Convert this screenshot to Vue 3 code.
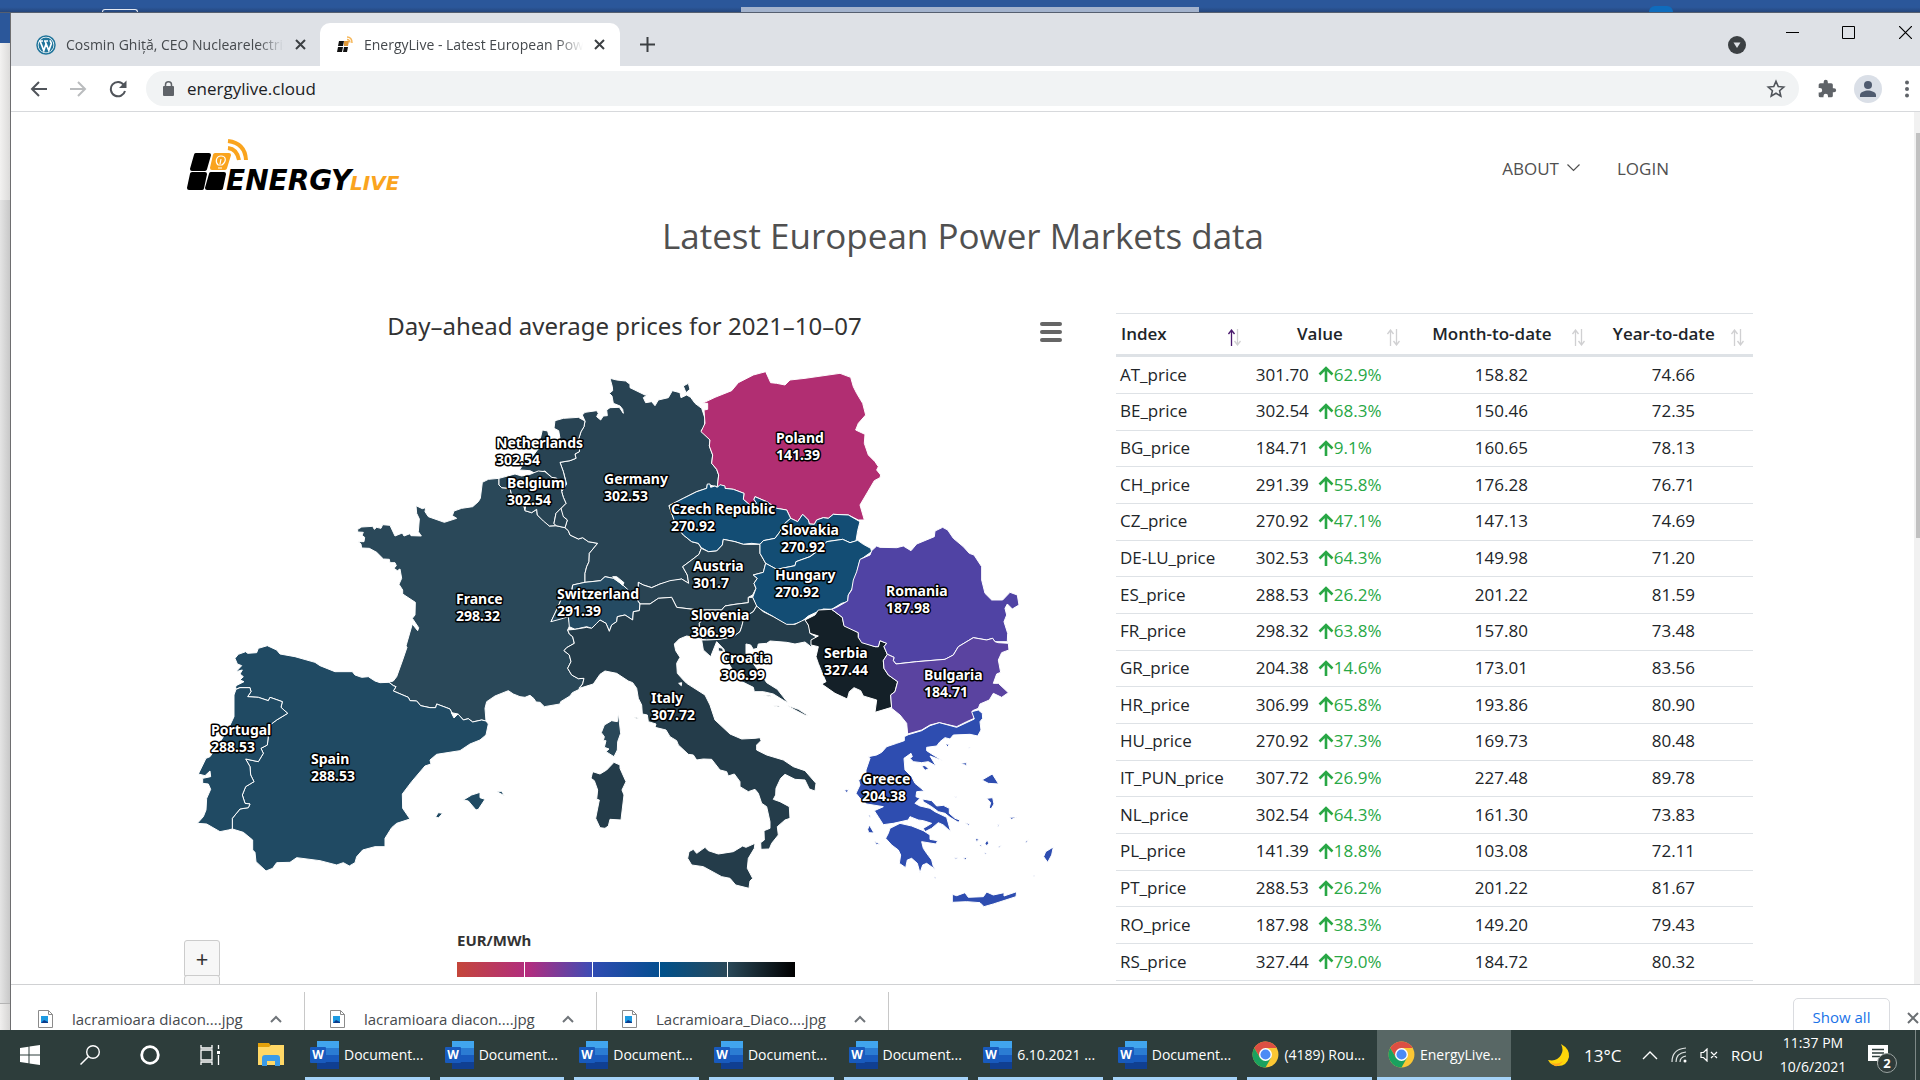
<script setup>
import { ref } from 'vue'

const address = ref('energylive.cloud')

const rows = [
  ['AT_price', '301.70', '62.9%', '158.82', '74.66'],
  ['BE_price', '302.54', '68.3%', '150.46', '72.35'],
  ['BG_price', '184.71', '9.1%', '160.65', '78.13'],
  ['CH_price', '291.39', '55.8%', '176.28', '76.71'],
  ['CZ_price', '270.92', '47.1%', '147.13', '74.69'],
  ['DE-LU_price', '302.53', '64.3%', '149.98', '71.20'],
  ['ES_price', '288.53', '26.2%', '201.22', '81.59'],
  ['FR_price', '298.32', '63.8%', '157.80', '73.48'],
  ['GR_price', '204.38', '14.6%', '173.01', '83.56'],
  ['HR_price', '306.99', '65.8%', '193.86', '80.90'],
  ['HU_price', '270.92', '37.3%', '169.73', '80.48'],
  ['IT_PUN_price', '307.72', '26.9%', '227.48', '89.78'],
  ['NL_price', '302.54', '64.3%', '161.30', '73.83'],
  ['PL_price', '141.39', '18.8%', '103.08', '72.11'],
  ['PT_price', '288.53', '26.2%', '201.22', '81.67'],
  ['RO_price', '187.98', '38.3%', '149.20', '79.43'],
  ['RS_price', '327.44', '79.0%', '184.72', '80.32']
]

const columns = ['Index', 'Value', 'Month-to-date', 'Year-to-date']

// Country outlines, grouped by map sheet; dx/dy is the sheet's origin.
const sheets = [
  {
    dx: 0, dy: 0,
    shapes: [
      { fill: '#2a4859', d: 'M957,355 925,358 907,367 901,415 895,425 878,440 845,445 822,453 817,467 830,475 793,487 745,470 735,455 737,443 727,446 708,437 710,460 718,477 715,515 724,528 693,527 690,521 672,528 667,519 645,528 630,496 608,494 603,505 590,502 583,508 578,499 545,501 533,508 533,516 550,517 546,526 554,532 552,545 535,545 543,552 545,564 568,565 590,577 610,597 628,598 630,608 645,608 649,617 642,625 652,632 660,627 665,655 657,673 668,690 668,702 706,727 705,765 697,775 716,803 713,812 697,792 678,858 681,862 668,900 650,950 640,963 627,967 640,977 648,980 640,993 685,1012 690,1022 710,1023 722,1037 750,1043 767,1043 770,1032 810,1047 820,1067 835,1063 850,1080 865,1076 878,1086 905,1080 918,1083 915,1045 920,1025 945,1008 985,992 1000,1002 1020,1010 1035,1012 1050,1006 1062,1016 1068,1026 1080,1027 1093,1040 1140,1032 1142,1025 1170,1008 1177,998 1198,988 1198,983 1208,972 1212,955 1195,956 1175,945 1163,925 1173,905 1168,885 1152,872 1160,863 1183,850 1178,830 1168,822 1163,810 1170,795 1165,770 1135,772 1113,785 1132,745 1145,715 1175,690 1178,675 1215,667 1215,640 1220,620 1227,605 1228,580 1253,550 1225,545 1208,533 1195,537 1170,525 1165,512 1155,503 1128,497 1108,498 1072,465 1070,448 1055,458 1035,452 1028,425 995,405 990,385 965,383 957,375Z' }
    ]
  },
  {
    dx: 900, dy: 0,
    shapes: [
      { fill: '#284353', d: 'M315,183 307,165 315,157 350,152 355,160 350,170 362,180 370,168 382,167 380,150 390,143 418,142 430,160 428,148 420,138 400,130 396,108 388,100 398,92 397,80 390,55 410,60 437,63 450,73 450,83 495,105 503,104 490,113 497,128 515,125 525,137 535,120 565,113 577,92 600,98 603,113 620,105 632,112 645,130 665,145 675,175 673,200 663,213 690,240 688,258 698,285 695,310 710,328 716,345 712,380 682,374 680,385 650,395 610,415 567,437 575,460 590,500 610,525 635,545 655,550 664,565 657,583 635,600 608,620 622,645 626,670 605,657 570,665 540,672 515,683 490,675 475,667 475,700 447,695 425,672 400,655 375,650 362,662 315,667 315,640 320,620 327,605 328,580 353,550 325,545 308,533 295,537 270,525 265,512 255,503 262,480 245,465 243,445 258,430 250,412 245,395 260,372 250,335 240,307 270,302 288,295 285,282 298,275 300,255 295,240 303,215 312,200Z M610,78 625,70 630,88 618,98Z' },
      { fill: '#284353', d: 'M315,183 295,172 250,175 225,182 222,205 236,212 240,235 225,245 210,240 203,213 187,210 180,240 178,262 150,300 128,316 118,330 150,332 165,340 195,333 215,352 230,355 232,370 250,377 256,360 250,335 240,307 270,302 288,295 285,282 298,275 300,255 295,240 303,215 312,200Z' },
      { fill: '#284454', d: 'M57,355 105,342 125,348 150,343 175,333 195,335 215,352 230,355 232,370 245,375 245,395 250,412 258,430 243,445 228,460 222,490 228,497 208,498 190,483 172,465 170,448 155,458 135,452 137,435 125,412 95,405 90,385 65,383 57,375Z' },
      { fill: '#284353', d: 'M243,445 228,460 222,490 228,497 255,503 262,480 250,470Z' },
      { fill: '#b12e72', d: 'M667,130 705,112 755,92 775,68 820,45 857,35 872,68 890,70 915,75 930,60 975,55 1080,40 1112,52 1120,80 1130,100 1148,130 1157,165 1135,190 1127,210 1155,223 1153,250 1165,285 1185,305 1195,320 1190,330 1202,345 1200,353 1183,362 1140,435 1153,480 1135,480 1105,465 1060,463 1045,475 1030,473 1010,480 1003,493 988,492 985,480 968,463 953,485 932,475 920,450 890,445 860,425 825,410 822,418 830,430 812,437 790,418 792,400 760,388 735,385 733,378 712,380 716,345 710,328 695,310 698,285 688,258 690,240 663,215 675,190 672,150 683,148 683,130Z' },
      { fill: '#134d74', d: 'M567,437 610,415 650,395 680,385 682,372 690,372 692,382 705,378 712,382 720,374 735,378 735,385 760,388 792,400 790,418 812,437 830,430 822,418 825,410 860,425 890,445 920,450 932,475 915,490 900,515 885,535 850,542 840,553 815,550 790,553 765,545 730,538 727,555 710,573 685,575 664,563 655,550 635,545 610,525 590,500 575,460Z' },
      { fill: '#2a4453', d: 'M475,667 490,675 515,683 540,672 570,662 605,657 626,670 622,645 608,620 635,600 657,583 664,565 685,575 710,573 727,555 730,538 765,545 790,553 840,553 840,580 857,610 850,637 820,645 832,655 822,670 828,685 818,705 805,712 805,728 765,733 735,738 725,750 655,750 590,742 575,712 535,715 510,732 480,732 470,715 475,700Z' },
      { fill: '#134d74', d: 'M932,475 953,485 968,463 985,480 988,492 1003,493 1010,480 1030,473 1045,475 1060,463 1105,465 1140,485 1133,512 1128,543 1110,548 1088,538 1040,545 1025,565 1010,572 990,590 948,605 945,617 890,628 857,610 840,580 840,553 850,542 885,535 900,515 915,490Z' },
      { fill: '#134d74', d: 'M857,610 890,628 945,617 948,605 990,590 1025,565 1040,545 1088,538 1110,548 1133,541 1150,553 1172,565 1175,575 1140,600 1130,640 1120,680 1105,705 1103,725 1085,730 1055,748 1030,747 985,768 965,785 935,795 915,793 880,770 830,742 818,712 828,685 822,670 832,655 820,645 850,637Z' },
      { fill: '#254b63', d: 'M315,667 362,662 375,650 400,655 425,672 445,690 447,700 470,718 480,732 478,752 460,755 458,780 435,765 412,770 410,785 395,795 388,814 378,790 360,780 350,790 335,805 320,800 285,808 268,800 265,770 250,775 213,785 232,745 245,715 275,700 278,675Z' },
      { fill: '#fff', d: 'M398,650 410,650 432,668 428,676Z' }
    ]
  },
  {
    dx: 0, dy: 780,
    shapes: [
      { fill: '#204a63', d: 'M627,187 640,197 648,200 640,213 685,232 690,242 710,243 722,257 750,263 767,263 770,252 810,267 820,287 835,283 850,300 865,296 878,306 905,300 918,303 925,312 918,345 900,360 870,372 840,392 770,403 750,420 753,432 735,438 695,485 667,522 668,565 690,597 650,610 635,623 615,655 615,680 585,680 548,690 530,710 525,728 508,738 490,728 470,735 420,722 350,713 330,727 290,728 278,745 258,753 228,725 225,697 218,690 218,660 190,637 157,627 157,595 180,567 205,563 210,552 195,550 187,525 197,500 222,485 212,465 210,440 197,417 235,425 250,400 243,385 262,375 267,330 270,315 290,300 323,280 303,262 307,245 270,232 265,242 235,232 203,230 213,215 210,203 180,203 166,208 168,197 192,185 180,180 190,170 180,162 187,150 168,155 185,137 172,132 165,115 175,103 197,95 203,100 230,98 235,85 262,77 290,90 300,102 345,110 405,127 420,137 465,155 517,155 525,165 545,172 565,170 585,183 600,188Z M850,540 875,525 900,517 900,533 915,538 895,568 888,570 865,543Z M948,514 965,514 973,527 960,520Z M767,590 775,578 788,580 775,594Z' },
      { fill: '#204a63', d: 'M157,627 157,595 180,567 205,563 210,552 195,550 187,525 197,500 222,485 212,465 210,440 197,417 235,425 250,400 243,385 262,375 267,330 270,315 290,300 323,280 303,262 307,245 270,232 265,242 235,232 203,230 213,215 210,203 180,203 168,208 162,225 162,290 148,320 118,370 90,410 78,415 55,462 75,467 90,453 92,470 68,475 68,490 85,492 92,508 80,535 78,570 70,590 52,610 80,612 120,635 145,630Z' },
      { fill: '#fff', d: 'M814,278 834,282 822,294Z' }
    ]
  },
  {
    dx: 1080, dy: 600,
    shapes: [
      { fill: '#243c4a', d: 'M83,210 105,208 140,202 155,205 170,190 180,180 198,190 208,214 215,195 230,185 232,170 255,165 278,180 280,155 298,152 300,132 330,132 355,115 395,112 410,142 475,150 495,170 478,190 478,212 487,238 460,232 440,228 418,237 403,252 407,272 420,292 410,310 412,340 430,360 440,370 495,405 510,435 525,480 570,522 605,537 645,535 660,533 663,542 650,555 650,570 680,585 730,600 760,620 795,632 828,670 825,693 808,687 795,660 765,658 735,643 722,655 708,685 707,705 700,718 720,725 748,740 750,775 735,780 712,800 715,825 695,850 688,867 663,868 662,848 673,840 672,812 690,805 690,785 680,740 665,730 655,700 645,688 625,695 600,680 600,665 583,642 565,648 560,635 540,630 515,598 490,597 470,600 460,585 445,583 415,555 410,542 390,530 378,510 345,502 348,492 325,485 322,465 307,462 305,435 295,415 290,385 278,368 265,363 230,340 195,333 180,343 160,372 118,385 128,372 132,355 115,356 95,345 83,325 93,305 88,285 72,272 80,263 103,250 98,230 88,222Z M460,868 470,880 495,862 505,872 535,882 580,875 608,858 618,862 645,850 643,865 625,895 622,925 638,955 630,963 627,985 587,975 570,955 545,950 490,920 455,915 443,895 447,875Z M222,607 240,615 240,625 258,665 246,690 252,705 243,780 210,778 205,798 195,805 180,803 167,775 178,720 170,718 173,690 163,662 153,655 158,635 180,642 200,630Z M283,471 297,473 290,476Z' },
      { fill: '#2a4859', d: 'M235,457 238,485 242,520 233,545 232,570 222,590 198,575 207,567 193,562 198,542 190,542 193,530 184,518 193,495 215,482 232,485Z' },
      { fill: '#243c4a', d: 'M475,150 545,150 555,138 585,133 625,128 625,112 638,112 650,138 640,155 615,170 605,200 600,215 580,230 540,238 500,240 485,238 478,212 478,190 495,170Z' },
      { fill: '#243c4a', d: 'M650,138 670,155 700,170 740,193 765,193 785,183 795,178 808,200 810,220 833,233 815,240 815,262 795,246 765,252 740,247 690,243 680,250 655,252 652,265 640,268 632,255 618,252 618,280 645,318 665,345 680,368 712,388 745,430 700,402 670,395 643,395 640,382 600,362 578,330 560,300 552,268 530,245 520,270 512,290 490,270 485,240 500,240 540,238 580,230 600,215 605,200 612,172 640,155Z M670,405 692,406 690,410Z M698,437 720,438 715,441Z M738,435 775,448 803,466 798,467 765,450Z M535,262 548,265 550,275 535,273Z' },
      { fill: '#fff', d: 'M416,370 425,368 424,377Z' }
    ]
  },
  {
    dx: 1800, dy: 420,
    shapes: [
      { fill: '#142028', d: 'M75,360 105,345 115,330 155,328 187,352 192,375 235,398 235,412 245,425 285,440 295,440 300,422 320,430 312,440 322,463 310,482 312,505 325,525 353,545 345,575 332,585 335,622 285,637 290,600 250,588 242,572 222,563 208,575 202,597 165,580 125,552 138,545 125,515 115,490 108,470 115,440 93,435 93,420 115,408 90,400 85,375Z' },
      { fill: '#5043a4', d: 'M155,328 170,322 203,303 205,285 215,270 220,240 230,215 240,178 270,165 275,152 290,138 300,142 350,143 370,138 393,152 410,132 463,110 465,93 488,82 503,90 520,115 550,140 568,160 582,165 605,200 605,240 615,280 635,300 668,300 690,277 712,285 717,315 697,327 682,312 675,325 680,345 672,365 683,400 682,425 645,425 638,415 620,420 580,413 535,440 520,465 495,478 410,485 348,492 340,482 342,472 322,463 312,440 320,430 300,422 295,440 285,440 245,428 235,412 235,398 192,378 187,352Z' },
      { fill: '#5a43a0', d: 'M322,463 342,472 340,482 348,492 410,485 495,478 520,465 535,440 580,413 620,420 638,415 645,425 655,428 685,430 687,450 665,458 655,480 662,517 650,522 640,550 655,550 685,578 665,592 640,580 628,600 600,612 595,625 578,632 583,655 560,665 530,680 478,668 450,675 425,690 383,702 380,670 360,645 335,625 332,585 345,575 353,545 325,525 312,505 310,482Z' },
      { fill: '#2e4db0', d: 'M595,630 607,640 608,655 600,665 603,690 593,708 570,703 520,705 510,717 495,713 480,725 470,738 440,742 440,752 455,762 488,782 450,768 468,798 445,785 425,788 400,785 390,775 397,770 393,760 372,775 375,810 395,830 405,850 433,873 410,875 408,890 420,895 405,910 420,918 450,925 465,935 500,952 512,995 490,975 475,968 455,985 435,995 430,985 455,970 430,962 415,960 390,950 385,960 340,970 310,974 283,932 310,920 260,912 240,895 228,880 240,855 236,840 258,825 258,810 270,775 265,770 290,765 305,757 320,740 350,730 373,722 373,710 385,704 425,692 450,677 478,668 530,682 583,657 575,635Z' },
      { fill: '#2e4db0', d: 'M330,985 360,970 395,978 430,992 450,1005 450,1018 473,1022 468,1032 425,1025 430,1045 440,1060 455,1080 460,1100 468,1110 440,1090 428,1095 420,1119 412,1090 395,1075 382,1080 377,1103 358,1090 362,1065 355,1050 335,1035 317,1015 325,1000Z M517,1183 530,1187 555,1178 565,1192 610,1190 620,1176 640,1185 672,1178 672,1188 710,1175 708,1190 640,1212 612,1220 600,1208 560,1205 517,1207Z M428,897 455,902 470,918 490,916 508,925 508,940 525,955 540,960 535,967 510,952 495,940 475,935 455,920 430,905Z M606,840 637,822 656,852 625,850Z M620,895 638,893 642,912 633,927 628,922 632,908Z M820,1041 815,1065 803,1087 791,1070 797,1055Z M688,952 710,951 695,958Z M495,732 508,733 503,740Z M540,790 560,788 560,797 550,793Z M425,797 435,797 446,806 435,811Z M263,988 268,975 282,999 266,998Z M283,1024 300,1032 290,1034Z M193,871 205,868 202,879Z M615,1030 622,1020 626,1030 620,1038Z M556,968 568,971 566,977Z M585,1015 597,1018 590,1025Z M523,1073 533,1073 528,1078Z M550,1073 562,1073 556,1079Z M652,975 660,971 654,980Z M598,1036 606,1034 603,1041Z M613,1058 622,1060 616,1063Z M735,1025 745,1019 739,1028Z M655,1040 664,1036 658,1043Z M564,741 571,742 567,745Z M462,1128 468,1133 464,1137Z M266,946 272,945 270,955Z M524,889 531,891 527,894Z M760,1126 764,1127 762,1132Z' }
    ]
  }
]

const labels = [
  ['Netherlands', '302.54', 316, 88],
  ['Belgium', '302.54', 327, 128],
  ['Germany', '302.53', 424, 124],
  ['Poland', '141.39', 596, 83],
  ['Czech Republic', '270.92', 491, 154],
  ['Slovakia', '270.92', 601, 175],
  ['Austria', '301.7', 513, 211],
  ['Hungary', '270.92', 595, 220],
  ['Switzerland', '291.39', 377, 239],
  ['France', '298.32', 276, 244],
  ['Slovenia', '306.99', 511, 260],
  ['Croatia', '306.99', 541, 303],
  ['Italy', '307.72', 471, 343],
  ['Romania', '187.98', 706, 236],
  ['Serbia', '327.44', 644, 298],
  ['Bulgaria', '184.71', 744, 320],
  ['Greece', '204.38', 682, 424],
  ['Portugal', '288.53', 31, 375],
  ['Spain', '288.53', 131, 404]
]

const downloads = ['lacramioara diacon....jpg', 'lacramioara diacon....jpg', 'Lacramioara_Diaco....jpg']

const tasks = [
  { kind: 'word', name: 'Document...' },
  { kind: 'word', name: 'Document...' },
  { kind: 'word', name: 'Document...' },
  { kind: 'word', name: 'Document...' },
  { kind: 'word', name: 'Document...' },
  { kind: 'word', name: '6.10.2021 ...' },
  { kind: 'word', name: 'Document...' },
  { kind: 'chrome', name: '(4189) Rou...' },
  { kind: 'chrome', name: 'EnergyLive...', active: true }
]
</script>

<template>
  <div class="desktop">
    <div class="behind-top">
      <span class="behind-tab"></span>
      <span class="behind-search"></span>
      <span class="behind-user"></span>
    </div>
    <div class="middle">
      <div class="behind-side"><i class="s1"></i><i class="s2"></i><i class="s3"></i><i class="s4"></i></div>
      <div class="browser">
        <div class="tabstrip">
          <div class="tab">
            <svg class="fav" width="20" height="20" viewBox="0 0 20 20">
              <circle cx="10" cy="10" r="9" fill="#fff" stroke="#21759b" stroke-width="1.5" />
              <circle cx="10" cy="10" r="7.5" fill="#21759b" />
              <path d="M3 6h4M8 6h4M4 6l3.800 9.500L10 9M9 6l3.800 9.500 2.400-6.500c.4-1.500-1-2-1-3.800" fill="none" stroke="#fff" stroke-width="1.700" />
            </svg>
            <span class="tab-title">Cosmin Ghiță, CEO Nuclearelectrica</span>
            <button class="plain x" aria-label="Close tab"><svg width="11" height="11" viewBox="0 0 11 11"><path d="M1 1l9 9M10 1l-9 9" stroke="#3c4043" stroke-width="2" /></svg></button>
          </div>
          <div class="tab active">
            <svg class="fav" width="18" height="18" viewBox="0 0 18 18">
              <path d="M3 5h5l-1 5h-5zM2 11h5l-1 5h-5zM8 11h4l-1 5h-4z" fill="#111" />
              <path d="M8 5h5l-1 5h-4z" fill="#e09a3a" />
              <path d="M11 1q5 0 5 6M11 3.500q2.500 0 3 3" fill="none" stroke="#f6b75a" stroke-width="1.500" />
            </svg>
            <span class="tab-title">EnergyLive - Latest European Power</span>
            <button class="plain x" aria-label="Close tab"><svg width="11" height="11" viewBox="0 0 11 11"><path d="M1 1l9 9M10 1l-9 9" stroke="#3c4043" stroke-width="2" /></svg></button>
          </div>
          <button class="plain newtab" aria-label="New tab"><svg width="15" height="15" viewBox="0 0 15 15"><path d="M7.500 0v15M0 7.500h15" stroke="#3c4043" stroke-width="2" /></svg></button>
          <span class="grow"></span>
          <button class="plain search-tabs" aria-label="Search tabs"><svg width="18" height="18" viewBox="0 0 18 18"><circle cx="9" cy="9" r="9" fill="#3c4043" /><path d="M5.500 6.500h7l-3.500 5.500z" fill="#dee1e6" /></svg></button>
          <button class="plain win" aria-label="Minimize"><svg width="13" height="13" viewBox="0 0 13 13"><path d="M0 6.500h13" stroke="#000" /></svg></button>
          <button class="plain win" aria-label="Maximize"><svg width="13" height="13" viewBox="0 0 13 13"><path d="M.5.5h12v12h-12z" fill="none" stroke="#000" /></svg></button>
          <button class="plain win" aria-label="Close"><svg width="13" height="13" viewBox="0 0 13 13"><path d="M0 0l13 13M13 0l-13 13" stroke="#000" stroke-width="1.200" /></svg></button>
        </div>

        <div class="toolbar">
          <button class="plain" aria-label="Back"><svg width="18" height="18" viewBox="0 0 18 18"><path d="M17 9H2M9 2L2 9l7 7" fill="none" stroke="#50545a" stroke-width="2" /></svg></button>
          <button class="plain" aria-label="Forward"><svg width="18" height="18" viewBox="0 0 18 18"><path d="M1 9h15M9 2l7 7-7 7" fill="none" stroke="#babcbe" stroke-width="2" /></svg></button>
          <button class="plain reload" aria-label="Reload"><svg width="18" height="18" viewBox="0 0 18 18"><path d="M14.800 4.800A7.200 7.200 0 1 0 16 11" fill="none" stroke="#50545a" stroke-width="2" /><path d="M17.500 0.500v7.500H10z" fill="#50545a" /></svg></button>
          <label class="omnibox">
            <svg width="11" height="15" viewBox="0 0 11 15"><rect y="5" width="11" height="10" rx="1" fill="#5f6368" /><path d="M2.500 6V3.800a3 3 0 0 1 6 0V6" fill="none" stroke="#5f6368" stroke-width="1.500" /></svg>
            <input v-model="address" aria-label="Address" />
            <svg width="20" height="20" viewBox="0 0 24 24"><path d="M12 2.800l2.700 6.200 6.600.6-5 4.400 1.500 6.600-5.800-3.500-5.800 3.500 1.500-6.600-5-4.400 6.600-.6z" fill="none" stroke="#50545a" stroke-width="1.900" /></svg>
          </label>
          <button class="plain" aria-label="Extensions"><svg width="20" height="20" viewBox="0 0 24 24"><path fill="#5f6368" d="M20.500 11H19V7a2 2 0 0 0-2-2h-4V3.500a2.500 2.500 0 0 0-5 0V5H4a2 2 0 0 0-2 2v3.800h1.500a2.700 2.700 0 0 1 0 5.400H2V20a2 2 0 0 0 2 2h3.800v-1.500a2.700 2.700 0 0 1 5.400 0V22H17a2 2 0 0 0 2-2v-4h1.500a2.500 2.500 0 0 0 0-5z" /></svg></button>
          <button class="plain profile" aria-label="Profile"><svg width="28" height="28" viewBox="0 0 28 28"><circle cx="14" cy="14" r="14" fill="#dadfe7" /><circle cx="14" cy="10" r="4" fill="#4f5b6f" /><path d="M6 22v-2c0-3 5-4.500 8-4.500s8 1.500 8 4.500v2z" fill="#4f5b6f" /></svg></button>
          <button class="plain" aria-label="Menu"><svg width="4" height="18" viewBox="0 0 4 18"><circle cx="2" cy="2.500" r="2" fill="#5f6368" /><circle cx="2" cy="9" r="2" fill="#5f6368" /><circle cx="2" cy="15.500" r="2" fill="#5f6368" /></svg></button>
        </div>

        <div class="viewport">
          <div class="page">
            <header class="site-head">
              <a href="#" class="logo" aria-label="EnergyLive">
                <svg width="216" height="58" viewBox="0 0 216 58">
                  <g stroke-linejoin="round" stroke-width="4">
                    <path d="M9 19h13l-4 14h-13z" fill="#000" stroke="#000" />
                    <path d="M5 38h13l-3 14h-13z" fill="#000" stroke="#000" />
                    <path d="M24 38h13l-3 14h-14z" fill="#000" stroke="#000" />
                    <path d="M28 19h14l-4 13h-13z" fill="#faa41e" stroke="#faa41e" />
                  </g>
                  <path d="M31 29c-3-3-2-9 3-9s6 5 1 9M31 29h4M31 32h4M34 23l-1 5" fill="none" stroke="#fff" stroke-width="1.200" />
                  <path d="M41 5q17 2 18 19M41 12q9 1 11 12" fill="none" stroke="#faa41e" stroke-width="4" />
                  <text class="energy" x="39" y="54">ENERGY</text>
                  <text class="live" x="163" y="54">LIVE</text>
                </svg>
              </a>
              <nav>
                <a href="#">ABOUT <svg width="13" height="8" viewBox="0 0 13 8"><path d="M.5.5l6 6 6-6" fill="none" stroke="#505050" stroke-width="1.200" /></svg></a>
                <a href="#">LOGIN</a>
              </nav>
            </header>

            <h1>Latest European Power Markets data</h1>

            <main>
              <section class="chart">
                <div class="chart-head">
                  <h2>Day–ahead average prices for 2021–10–07</h2>
                  <button class="plain burger" aria-label="Chart menu"><i></i><i></i><i></i></button>
                </div>
                <svg class="map" viewBox="4 0 900 560" role="img" aria-label="Day-ahead prices by country">
                  <g transform="scale(0.33333)" stroke="#fff" stroke-width="3" stroke-linejoin="round">
                    <g v-for="(s, i) in sheets" :key="i" :transform="`translate(${s.dx} ${s.dy})`">
                      <path v-for="(p, j) in s.shapes" :key="j" :d="p.d" :fill="p.fill" />
                    </g>
                  </g>
                  <g class="labels">
                    <text v-for="l in labels" :key="l[0]" :x="l[2]" :y="l[3]">
                      {{ l[0] }}<tspan :x="l[2]" dy="17">{{ l[1] }}</tspan>
                    </text>
                  </g>
                </svg>
                <div class="chart-foot">
                  <div class="zoom">
                    <button>+</button>
                    <button aria-label="Zoom out"></button>
                  </div>
                  <div class="legend">
                    <strong>EUR/MWh</strong>
                    <div class="scale"><i></i><i></i><i></i><i></i><i></i></div>
                  </div>
                </div>
              </section>

              <section class="prices">
                <table>
                  <colgroup><col class="c1" /><col class="c2" /><col class="c3" /><col class="c4" /></colgroup>
                  <thead>
                    <tr>
                      <th v-for="(c, i) in columns" :key="c" scope="col">
                        {{ c }}
                        <svg class="sort" width="13" height="17" viewBox="0 0 13 17" fill="none">
                          <path d="M3.500 17V2M.5 5l3-4 3 4" :stroke="i === 0 ? '#4a1a6e' : '#d0d0d2'" stroke-width="1.300" />
                          <path d="M9.500 0v15M6.500 12l3 4 3-4" stroke="#d0d0d2" stroke-width="1.300" />
                        </svg>
                      </th>
                    </tr>
                  </thead>
                  <tbody>
                    <tr v-for="r in rows" :key="r[0]">
                      <td>{{ r[0] }}</td>
                      <td>
                        <div class="value">
                          <span class="num">{{ r[1] }}</span>
                          <svg width="16" height="16" viewBox="0 0 16 16"><path d="M8 16V2M1.500 8.500L8 2l6.500 6.500" fill="none" stroke="#28a745" stroke-width="2.600" /></svg>
                          <span class="up">{{ r[2] }}</span>
                        </div>
                      </td>
                      <td>{{ r[3] }}</td>
                      <td>{{ r[4] }}</td>
                    </tr>
                  </tbody>
                </table>
              </section>
            </main>
          </div>
          <div class="scrollbar"><i></i></div>
        </div>

        <div class="downloads">
          <div v-for="(d, i) in downloads" :key="i" class="download">
            <svg width="15" height="18" viewBox="0 0 15 18"><path d="M.5.5h10l4 4v13h-14z" fill="#fff" stroke="#8b8b8b" /><path d="M10.500.5v4h4" fill="none" stroke="#8b8b8b" /><path d="M3 6h7v7H3z" fill="#1e9be2" /><path d="M3 13l3-3 4 2v1z" fill="#0d3c8c" /></svg>
            <span>{{ d }}</span>
            <button class="plain" aria-label="File options"><svg width="12" height="8" viewBox="0 0 12 8"><path d="M1 7l5-5 5 5" fill="none" stroke="#70757a" stroke-width="2" /></svg></button>
          </div>
          <span class="grow"></span>
          <button class="showall">Show all</button>
          <button class="plain dx" aria-label="Close downloads"><svg width="12" height="12" viewBox="0 0 12 12"><path d="M1 1l10 10M11 1L1 11" stroke="#6b6f73" stroke-width="2" /></svg></button>
        </div>
      </div>
    </div>

    <footer class="taskbar">
      <div class="system">
        <button class="plain" aria-label="Start"><svg width="20" height="20" viewBox="0 0 20 20"><path d="M0 3l8.500-1.200v7.700H0zM9.500 1.600L20 0v9.500H9.500zM0 10.500h8.500v7.700L0 17zM9.500 10.500H20V20L9.500 18.400z" fill="#fff" /></svg></button>
        <button class="plain" aria-label="Search"><svg width="20" height="20" viewBox="0 0 20 20"><circle cx="13" cy="7" r="6.300" fill="none" stroke="#fff" stroke-width="1.400" /><path d="M8.500 11.500L.5 19.500" stroke="#fff" stroke-width="1.500" /></svg></button>
        <button class="plain" aria-label="Cortana"><svg width="20" height="20" viewBox="0 0 20 20"><circle cx="10" cy="10" r="8.300" fill="none" stroke="#fff" stroke-width="2.800" /></svg></button>
        <button class="plain" aria-label="Task view"><svg width="20" height="20" viewBox="0 0 20 20" fill="none" stroke="#fff" stroke-width="1.300"><path d="M1 5h11v10H1zM1 0v3h11V0M1 20v-3h11v3M18.500 0v4M18.500 10v10" /><path d="M17 6h3v3h-3z" fill="#fff" stroke="none" /></svg></button>
        <button class="plain" aria-label="File Explorer"><svg width="28" height="24" viewBox="0 0 28 24"><path d="M1 0h11l2 3v3H1z" fill="#e2a10b" /><path d="M1 4h11l2-2h13v20H1z" fill="#ffd866" /><path d="M5 23V15q0-3 3-3h12q3 0 3 3v8h-5v-5h-8v5z" fill="#3a9be8" /></svg></button>
      </div>
      <div class="tasks">
        <button v-for="(t, i) in tasks" :key="i" class="task" :class="{ current: t.active }">
          <svg v-if="t.kind === 'word'" width="29" height="28" viewBox="0 0 29 28">
            <path d="M7 0h22v7H7z" fill="#41a5ee" /><path d="M7 7h22v7H7z" fill="#2b7cd3" /><path d="M7 14h22v7H7z" fill="#185abd" /><path d="M7 21h22v7H7z" fill="#103f91" />
            <rect y="6" width="16" height="16" rx="1" fill="#185abd" /><text class="w" x="8" y="18" text-anchor="middle">W</text>
          </svg>
          <svg v-else width="27" height="27" viewBox="0 0 48 48">
            <circle cx="24" cy="24" r="23" fill="#fbc734" />
            <path d="M4 12.500A23 23 0 0 1 44 12.500H24L14 29.500z" fill="#dd4f43" />
            <path d="M4 12.500A23 23 0 0 0 24 47L34 29.500H14z" fill="#1aa15f" />
            <circle cx="24" cy="24" r="11.500" fill="#fff" /><circle cx="24" cy="24" r="9" fill="#4c8bf5" />
          </svg>
          <span>{{ t.name }}</span>
        </button>
      </div>
      <div class="tray">
        <svg width="24" height="24" viewBox="0 0 24 24"><path d="M14 1q9 5 8 13-2 9-11 9-7 0-10-6 9 2 13-5 3-5 0-11z" fill="#ffd60a" /><path d="M3 19q7 4 13-1-4 6-8 5z" fill="#ffa51f" /></svg>
        <span class="temp">13°C</span>
        <svg width="16" height="10" viewBox="0 0 16 10"><path d="M1 9l7-7 7 7" fill="none" stroke="#fff" stroke-width="1.400" /></svg>
        <svg width="16" height="16" viewBox="0 0 16 16" fill="none" stroke="#dfe4e3" stroke-width="1.200"><path d="M1 15Q1 2 15 1M5 15Q5 6 15 5M9 15q0-5 6-6" /><circle cx="14" cy="14" r="1.500" fill="#fff" stroke="none" /></svg>
        <svg width="19" height="14" viewBox="0 0 19 14" fill="none" stroke="#fff" stroke-width="1.200"><path d="M1 4.500h2.500L7 1v12L3.500 9.500H1zM11 4l6 6M17 4l-6 6" /></svg>
        <span class="lang">ROU</span>
        <div class="clock"><span>11:37 PM</span><span>10/6/2021</span></div>
        <div class="notes">
          <svg width="21" height="20" viewBox="0 0 21 20"><path d="M0 0h20v16h-7l-4 4v-4H0z" fill="#fff" /><path d="M4 4.500h12M4 8h12M4 11.500h8" stroke="#2d3d3b" stroke-width="1.300" /></svg>
          <b>2</b>
        </div>
        <i class="peek"></i>
      </div>
    </footer>
  </div>
</template>

<style>
body { margin: 0; overflow: hidden; }
</style>

<style scoped>
* { box-sizing: border-box; }
.desktop {
  display: flex;
  flex-direction: column;
  height: 100vh;
  background: #fff;
  font-family: 'Open Sans', 'Noto Sans', sans-serif;
  color: #212529;
}
.plain { display: inline-flex; align-items: center; justify-content: center; border: 0; padding: 0; background: none; flex: none; }
.grow { flex: 1; }
svg { flex: none; display: block; }

.behind-top { height: 13px; flex: none; background: linear-gradient(#2b579a 60%, #25467c); border-bottom: 1px solid #555f70; display: flex; align-items: flex-end; }
.behind-tab { width: 36px; height: 3px; margin-left: 102px; border: 1px solid #e4e9f2; border-bottom: 0; border-radius: 3px 3px 0 0; }
.behind-search { width: 458px; height: 5px; margin-left: 603px; background: #a3b3cd; }
.behind-user { width: 24px; height: 6px; margin-left: 450px; background: #0f6cbd; border-radius: 12px 12px 0 0; }
.middle { flex: 1; min-height: 0; display: flex; }
.behind-side { width: 11px; flex: none; display: flex; flex-direction: column; border-right: 1px solid #6e6e70; }
.s1 { height: 30px; background: #2b579a; }
.s2 { height: 157px; background: linear-gradient(90deg, #f3f2f1, #dcdbda); }
.s3 { flex: 1; background: linear-gradient(90deg, #e4e4e4, #c8c8c8); border-bottom: 1px solid #b4b4b4; }
.s4 { height: 26px; background: linear-gradient(90deg, #f0efee, #d6d5d4); }
.browser { flex: 1; min-width: 0; display: flex; flex-direction: column; background: #fff; }

.tabstrip { height: 53px; flex: none; display: flex; align-items: flex-end; background: #dee1e6; }
.tab { height: 43px; width: 300px; display: flex; align-items: center; padding: 0 15px 0 16px; }
.tab:first-child { width: 309px; padding-left: 25px; padding-right: 14px; }
.tab.active { background: #fff; border-radius: 10px 10px 0 0; }
.fav { margin-right: 10px; }
.tab-title { flex: 1; font-size: 14px; color: #45494d; white-space: nowrap; overflow: hidden; mask-image: linear-gradient(90deg, #000 88%, transparent); }
.x { margin-left: 11px; }
.newtab { height: 43px; margin-left: 20px; }
.search-tabs { height: 43px; margin-right: 40px; }
.win { height: 53px; padding-bottom: 15px; margin-right: 43px; }
.win:last-child { margin: 0 8px 0 1px; }

.toolbar { height: 46px; flex: none; display: flex; align-items: center; gap: 21px; padding: 0 11px 0 19px; border-bottom: 1px solid #d7d9dc; }
.reload { margin-left: 1px; }
.omnibox { flex: 1; height: 35px; display: flex; align-items: center; padding: 0 13px 0 17px; border-radius: 18px; background: #f1f3f4; margin: 0 -3px 0 -2px; }
.omnibox input { flex: 1; min-width: 0; border: 0; outline: 0; background: none; margin-left: 11px; font: 17px 'Open Sans', 'Noto Sans', sans-serif; color: #202124; }
.profile { margin: 0 2px 0 -4px; }

.viewport { flex: 1; min-height: 0; display: flex; }
.page { flex: 1; min-width: 0; overflow: hidden; padding: 24px 161px 0 173px; }
.scrollbar { width: 6px; flex: none; background: #f1f1f1; padding: 21px 0 0 2px; }
.scrollbar i { display: block; height: 405px; background: #c1c1c1; }
.site-head { display: flex; justify-content: space-between; height: 58px; padding-right: 84px; }
.logo { margin-left: 3px; }
.energy { font: italic bold 28px 'DejaVu Sans', sans-serif; fill: #000; }
.live { font: italic bold 20px 'DejaVu Sans', sans-serif; fill: #faa41e; }
nav { display: flex; align-items: center; gap: 37px; padding-top: 6px; }
nav a { display: flex; align-items: center; gap: 8px; font-size: 17px; font-weight: 500; color: #505050; text-decoration: none; }
h1 { margin: 17px 0 50px; font-size: 35px; line-height: 50px; font-weight: 400; text-align: center; color: #505050; padding-right: 11px; }

main { display: grid; grid-template-columns: minmax(0, 900fr) minmax(0, 637fr); gap: 32px; align-items: start; }
.chart-head { display: grid; height: 49px; align-items: start; }
.chart-head > * { grid-area: 1 / 1; }
h2 { margin: 0; padding-right: 19px; font: 400 24px/30px 'Noto Sans', sans-serif; text-align: center; color: #333; }
.burger { flex-direction: column; gap: 4px; justify-self: end; width: 22px; margin: 11px 22px 0 0; }
.burger i { width: 22px; height: 4px; border-radius: 2px; background: #666; }
.map { width: 100%; height: auto; }
.labels text { font: bold 14px 'Noto Sans', sans-serif; fill: #fff; stroke: #000; stroke-width: 3px; stroke-linejoin: round; paint-order: stroke; }
.chart-foot { display: grid; grid-template-columns: 273fr 338fr 289fr; }
.zoom { margin-top: 20px; width: 36px; }
.zoom button { display: block; width: 36px; height: 36px; margin-bottom: -1px; padding: 0; border: 1px solid #ccc; background: #f7f7f7; font: 22px 'Noto Sans', sans-serif; color: #333; border-radius: 3px 3px 0 0; }
.legend { padding-top: 8px; }
.legend strong { display: block; font: bold 15px/24px 'Noto Sans', sans-serif; color: #333; margin-bottom: 10px; }
.scale { display: grid; grid-template-columns: repeat(5, 1fr); gap: 1px; }
.scale i { height: 15px; }
.scale i:nth-child(1) { background: linear-gradient(90deg, #c4463a, #b12e7c); }
.scale i:nth-child(2) { background: linear-gradient(90deg, #b82b7c, #3d4cb5); }
.scale i:nth-child(3) { background: linear-gradient(90deg, #2f4bb2, #054f90); }
.scale i:nth-child(4) { background: linear-gradient(90deg, #00518c, #2a4858); }
.scale i:nth-child(5) { background: linear-gradient(90deg, #2a4858, #000); }

table { width: 100%; height: 668px; margin-top: 2px; border-collapse: collapse; table-layout: fixed; font-size: 17px; }
.c1 { width: 21%; }
.c2 { width: 25%; }
.c3 { width: 29%; }
.c4 { width: 25%; }
thead tr { height: 42px; }
th { position: relative; padding: 0 19px 2px 0; border-top: 1px solid #dee2e6; border-bottom: 3px solid #dee2e6; font-weight: 600; text-align: center; white-space: nowrap; }
th:first-child { text-align: left; padding-left: 5px; }
.sort { position: absolute; right: 9px; bottom: 8px; }
td { padding: 0 0 2px; text-align: center; border-bottom: 1px solid #dee2e6; }
td:first-child { text-align: left; padding-left: 4px; }
.value { display: flex; align-items: center; padding-left: 6px; }
.num { margin-right: 9px; }
.up { color: #28a745; }

.downloads { height: 46px; flex: none; display: flex; padding-left: 2px; border-top: 1px solid #d0d1d3; overflow: hidden; }
.download { display: flex; align-items: center; height: 60px; width: 292px; margin-top: 7px; padding: 0 22px 6px 25px; border-right: 1px solid #c8c8c8; }
.download span { flex: 1; margin-left: 19px; font-size: 15px; color: #45494d; white-space: nowrap; }
.showall { width: 97px; height: 40px; margin-top: 13px; padding: 0 0 2px; border: 1px solid #dadce0; border-radius: 5px; background: #fff; color: #1a73e8; font: 500 15px 'Open Sans', 'Noto Sans', sans-serif; }
.dx { margin: 20px 1px 0 17px; height: 26px; }

.taskbar { height: 50px; flex: none; display: flex; background: #2d3d3b; color: #fff; }
.system { display: flex; align-items: center; gap: 40px; padding-left: 20px; width: 305px; }
.system button:last-child { margin-left: -3px; }
.tasks { display: flex; gap: 10px; width: 1206px; }
.task { flex: 1; display: flex; align-items: center; gap: 5px; height: 50px; padding: 2px 0 0 5px; border: 0; border-bottom: 3px solid #a5d3f8; background: none; color: #fff; font: 14px 'Open Sans', 'Noto Sans', sans-serif; white-space: nowrap; }
.task.current { flex: none; width: 134px; background: #586765; padding-left: 11px; margin-left: -5px; }
.w { font: bold 12px 'Open Sans', sans-serif; fill: #fff; }
.tray { flex: 1; display: flex; align-items: center; padding-left: 36px; font-size: 15px; }
.temp { font-size: 17px; width: 59px; padding-left: 13px; white-space: nowrap; margin-right: 12px; }
.tray > svg + svg { margin-left: 13px; }
.lang { margin-left: 12px; width: 34px; }
.clock { display: flex; flex-direction: column; align-items: center; line-height: 24px; font-size: 14px; width: 78px; margin-left: 9px; }
.notes { position: relative; margin-left: 16px; }
.notes b { position: absolute; left: 9px; top: 8px; width: 20px; height: 20px; border: 1px solid #9aa3a1; border-radius: 50%; background: #2f3b3a; font-size: 13px; line-height: 18px; text-align: center; }
.peek { margin-left: auto; margin-right: 4px; width: 1px; height: 50px; background: #7d8886; }
</style>
